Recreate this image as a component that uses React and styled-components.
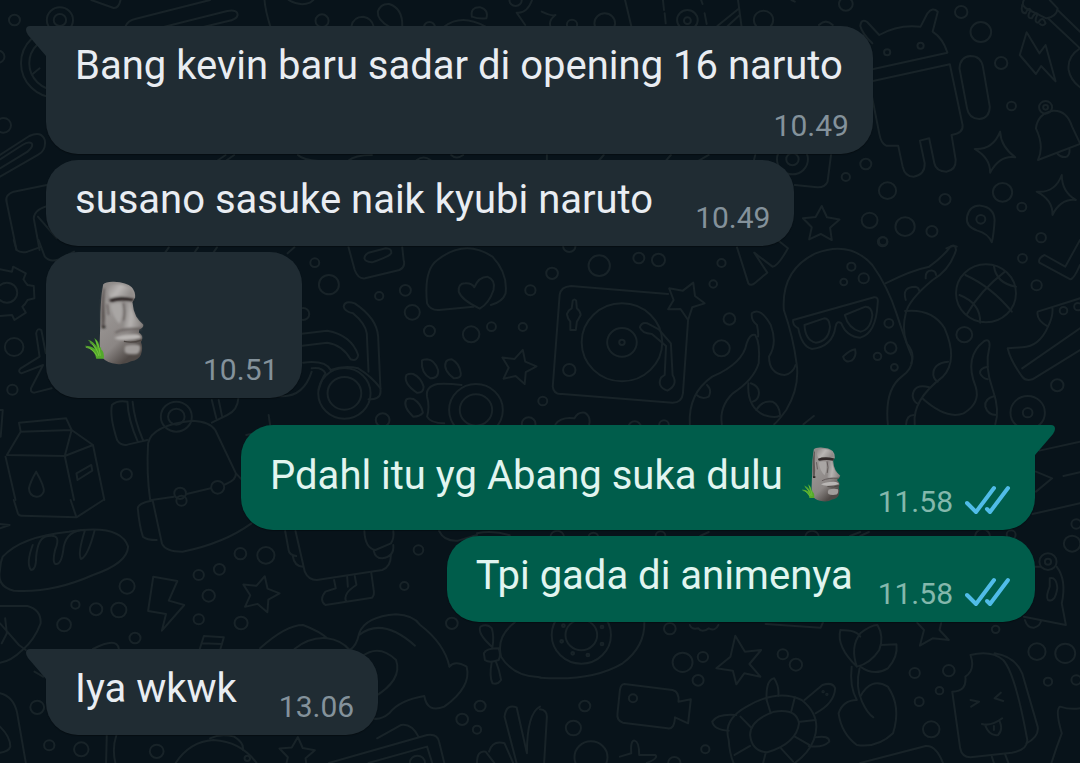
import { useId } from "react";
import styled, { createGlobalStyle } from "styled-components";

const GlobalStyle = createGlobalStyle`
  * {
    margin: 0;
    padding: 0;
    box-sizing: border-box;
  }

  body {
    background-color: #08131a;
    font-family: Roboto, "Liberation Sans", sans-serif;
  }
`;

const Container = styled.main`
  position: relative;
  min-height: 100vh;
  overflow: hidden;
  padding: 26px 45px 28px 46px;
`;

const WallpaperSvg = styled.svg`
  position: absolute;
  inset: 0;
  width: 100%;
  height: 100%;
  fill: none;
  stroke: #182328;
  stroke-width: 2;
  stroke-linecap: round;
  stroke-linejoin: round;

  path,
  circle {
    vector-effect: non-scaling-stroke;
  }
`;

const MessageList = styled.ol`
  position: relative;
  list-style: none;
  display: flex;
  flex-direction: column;
`;

const Bubble = styled.li`
  position: relative;
  display: flex;
  flex-direction: ${({ $stacked }) => ($stacked ? "column" : "row")};
  align-items: flex-end;
  align-self: ${({ $own }) => ($own ? "flex-end" : "flex-start")};
  gap: ${({ $own, $stacked }) => ($stacked ? 6 : $own ? 25 : 42)}px;
  max-width: 90%;
  margin-top: ${({ $first }) => ($first ? 27 : 6)}px;
  padding: 16px 24px 10px 29px;
  border-radius: 32px;
  border-top-left-radius: ${({ $own, $first }) =>
    !$own && $first ? 0 : 32}px;
  border-top-right-radius: ${({ $own, $first }) =>
    $own && $first ? 0 : 32}px;
  background-color: ${({ $own }) => ($own ? "#005d4b" : "#202c33")};
  color: ${({ $own }) => ($own ? "#e1f5f0" : "#e9edf2")};
  box-shadow: 0px 1px 1px 0px rgba(0, 0, 0, 0.3);

  &:first-child {
    margin-top: 0px;
  }
`;

const TailSvg = styled.svg`
  position: absolute;
  top: 0px;
  width: 21px;
  height: 31px;
  ${({ $own }) => ($own ? "right: -20px;" : "left: -20px;")}
  fill: ${({ $own }) => ($own ? "#005d4b" : "#202c33")};
`;

const Text = styled.p`
  margin-bottom: 12px;
  margin-right: ${({ $stacked }) => ($stacked ? 6 : 0)}px;
  font-size: 40px;
  line-height: 48px;
`;

const Meta = styled.div`
  display: flex;
  align-items: flex-end;
  gap: 12px;
  flex-shrink: 0;
  color: ${({ $own }) => ($own ? "#84b8ac" : "#84929b")};

  time {
    font-size: 30px;
    line-height: 36px;
  }
`;

const TicksSvg = styled.svg`
  width: 46px;
  height: 30px;
  margin-bottom: 5px;
  fill: none;
  stroke: #50bce8;
  stroke-width: 4;
  stroke-linecap: round;
  stroke-linejoin: round;
`;

const MoaiSvg = styled.svg`
  display: ${({ $large }) => ($large ? "block" : "inline-block")};
  width: ${({ $large }) => ($large ? 60 : 40)}px;
  height: ${({ $large }) => ($large ? 84 : 55)}px;
  margin: ${({ $large }) => ($large ? "13px 17px 23px 9px" : "6px 12px 6px 8px")};
  vertical-align: ${({ $large }) => ($large ? "baseline" : "-19px")};
`;

//======================================================

const star = (cx, cy, r, turn = 0) => {
  const points = Array.from({ length: 10 }, (_, i) => {
    const angle = ((i * 36 - 90 + turn) * Math.PI) / 180;
    const radius = i % 2 ? r * 0.5 : r;
    return `${(cx + radius * Math.cos(angle)).toFixed(1)} ${(
      cy +
      radius * Math.sin(angle)
    ).toFixed(1)}`;
  });
  return `M${points.join("L")}Z`;
};

// the wallpaper is drawn in six tiles, each with its own coordinates
const tiles = [
  {
    x: 0,
    y: 0,
    circles: [
      [42, 60, 16], [174, 60, 38], [174, 60, 18], [-5, 170, 18], [10, 376, 22],
      [935, 62, 19], [1247, 82, 16], [1497, 0, 18], [165, 190, 104],
      [165, 190, 80],
    ],
    paths: [
      "M265 0L330 24Q345 25 350 0",
      "M365 78Q370 62 395 56L610 0M440 90L660 33Q690 28 690 45Q688 58 660 64L520 98",
      "M768 0Q770 30 785 80M838 0Q870 20 900 8L910 0",
      "M1020 80Q1025 50 1055 50Q1080 55 1085 80M1130 80Q1095 60 1097 35Q1105 10 1130 12Q1170 25 1168 80",
      "M1290 80Q1340 40 1410 80M1370 50Q1365 20 1395 22Q1420 30 1412 55Q1390 58 1370 50",
      "M1545 0Q1530 42 1500 38L1525 75",
      "M95 222L115 205",
      "M0 465L85 408Q120 392 130 420Q135 450 110 465L0 530M0 505L80 455Q98 440 92 430Q82 424 65 435L0 478",
      "M150 552L40 575Q12 585 20 610L48 750M150 615Q100 625 98 655L115 750M110 650L165 715",
      "M630 483L655 465M655 483L680 465M865 465Q880 480 925 483M1010 483Q1030 465 1080 465M1210 480Q1230 465 1250 480M1310 465Q1325 480 1345 465",
    ],
  },
  {
    x: 540,
    y: 0,
    circles: [
      [888, 12, 20], [1223, 36, 18], [1280, 96, 30], [1339, 189, 18],
      [1369, 318, 13], [946, 492, 16], [888, 531, 12], [1009, 572, 25],
      [1176, 598, 16], [1343, 577, 28], [1399, 621, 13], [957, 661, 23],
      [1060, 680, 28], [1138, 694, 16], [996, 724, 12], [1455, 713, 14],
      [428, 60, 30], [428, 62, 10], [649, 60, 28], [188, 70, 30],
      [93, 74, 15], [733, 478, 45], [733, 478, 18], [1008, 157, 9],
      [1105, 137, 9], [1468, 322, 19], [1468, 322, 7], [1280, 658, 13],
    ],
    paths: [
      "M985 105L950 66Q932 55 930 78Q935 100 965 130M985 105Q1040 72 1105 80L1125 40Q1140 20 1155 35L1140 95Q1170 115 1183 158L955 210",
      "M950 247L1190 193L1227 375Q1230 400 1195 405L1207 480Q1208 510 1180 515Q1150 515 1145 490L1130 415L1103 422L1117 490Q1118 525 1085 530Q1060 530 1053 500L1040 437L1005 437Q990 430 985 400L955 243",
      "M1218 205Q1220 170 1250 168Q1280 168 1286 200L1306 320Q1305 355 1275 357Q1245 355 1240 325Z",
      "M1413 97L1393 165L1440 222L1455 198L1497 244L1468 135L1450 160Z",
      "M1405 0Q1395 20 1420 30L1470 55Q1500 50 1503 25L1480 0M1503 30L1568 95M1475 55L1568 145M1568 145Q1530 170 1535 210Q1540 240 1568 262",
      "M1400 15Q1395 40 1410 40Q1418 20 1425 30Q1410 55 1428 55Q1438 35 1445 42Q1432 68 1447 68Q1460 45 1468 70Q1460 80 1452 72",
      "M1440 385Q1445 340 1490 332Q1530 330 1545 380L1568 430M1440 385Q1465 440 1446 480L1568 432M1503 462Q1515 475 1530 470Q1540 462 1537 445",
      "M1336 395Q1338 440 1380 472Q1335 465 1307 518Q1308 475 1262 447Q1315 450 1336 395Z",
      "M1515 525Q1515 575 1556 600Q1512 595 1488 645Q1490 600 1442 575Q1495 580 1515 525Z",
      "M1312 727Q1300 700 1270 692Q1235 680 1240 650Q1248 615 1280 617Q1318 622 1320 660Q1318 700 1312 727Z",
      star(816, 674, 56, 2),
      "M845 465L835 545Q828 563 805 562L740 555M620 485L625 465M365 483L380 465M460 483L490 465M170 483L185 465M20 483V465",
      "M247 0L265 78M575 0L585 78M515 78L575 28M545 78L580 45M357 0L360 30M362 40L365 70M468 0L472 12M478 40L484 72",
      "M5 35Q35 50 45 45Q25 60 30 78M810 75Q830 55 850 75M1180 745Q1200 735 1210 740M730 0L740 5",
    ],
  },
  {
    x: 0,
    y: 240,
    circles: [
      [20, 158, 30], [41, 321, 27], [36, 449, 15], [914, 68, 13],
      [955, 134, 29], [1177, 151, 16], [1101, 168, 12], [1197, 217, 22],
      [1247, 273, 16], [1368, 283, 24], [1427, 260, 13], [1518, 261, 12],
      [1540, 151, 15], [880, 222, 18], [367, 703, 16], [1000, 460, 49],
      [1000, 460, 76], [1382, 510, 47], [1382, 510, 78], [1111, 540, 20],
      [1535, 552, 20], [512, 530, 45], [512, 530, 24], [523, 760, 17],
      [632, 742, 19],
    ],
    paths: [
      "M0 88L35 95L38 80L75 100L68 118Q75 130 80 135L98 138L100 175L80 180Q72 195 65 200L75 218L42 240L35 225L0 228",
      "M40 0L48 30Q60 40 80 35L115 22M112 0L130 50Q145 68 170 58L215 35",
      "M480 37L490 22M565 37L575 22M620 37L630 22M855 22L835 40",
      "M133 340L120 270Q108 262 105 280L115 350L60 385Q50 395 62 400L125 375L90 445Q88 458 100 458L150 445",
      "M1012 22L1030 90Q1040 118 1060 115L1160 90Q1178 80 1172 60L1168 22M1070 38L1120 25Q1138 25 1136 40Q1130 50 1080 67Q1060 65 1058 55Q1058 45 1070 38Z",
      "M1375 200L1275 210Q1250 212 1240 190Q1230 90 1270 60Q1350 -5 1430 50Q1475 100 1468 160Q1460 185 1425 195",
      "M1393 206Q1340 180 1332 155Q1330 130 1350 130Q1370 128 1377 142Q1390 110 1415 110Q1440 120 1433 150Q1420 190 1393 206Z",
      "M1070 395L1065 280Q1060 250 1025 220Q1000 215 998 200Q1000 180 1030 190Q1095 235 1098 290L1105 455Q1105 478 1070 478",
      "M870 282L950 272Q1020 285 1040 345Q1038 365 1018 358Q995 315 950 308L872 318",
      "M880 368Q945 360 960 390Q1000 375 1040 385Q1080 410 1105 445M925 450Q935 415 945 400Q935 380 905 385M810 468Q880 475 905 395",
      "M1225 362Q1222 400 1250 415Q1275 415 1272 390Q1262 360 1240 358Q1228 358 1225 362ZM1295 365Q1285 390 1318 415Q1340 415 1338 400Q1335 370 1312 358Q1300 358 1295 365Z",
      "M1180 405Q1170 430 1210 458Q1230 460 1230 440Q1222 412 1200 402Q1188 400 1180 405ZM1180 478Q1168 500 1200 530Q1220 530 1228 518Q1222 490 1200 477Q1188 474 1180 478Z",
      "M1340 435Q1300 430 1270 432Q1235 440 1240 470Q1248 500 1240 530Q1250 550 1290 550",
      star(1504, 382, 54, 15),
      "M55 548L192 535L208 570L188 648L20 645L60 575ZM60 575L208 570L270 615L188 648L215 780M270 615L303 780M16 650L45 780",
      "M222 700L265 675L268 692L225 720ZM105 695Q130 740 127 755Q120 772 105 770Q85 768 84 745Q88 725 105 695Z",
      "M0 510L8 510L2 590",
      "M428 600L370 614Q350 618 340 600Q318 530 325 495Q340 480 370 485Q372 540 400 605M385 485Q390 540 415 600",
      "M615 480L628 535M635 480L645 530M692 475Q690 510 660 525L615 548",
      "M436 780Q425 700 430 610Q440 555 560 542Q610 545 625 570L685 700Q685 720 660 730L650 735M612 745L542 762M505 770L440 780M685 700L705 722",
      "M780 525Q782 540 785 560M715 585L740 580",
    ],
  },
  {
    x: 540,
    y: 240,
    circles: [
      [238, 307, 117], [238, 307, 43], [238, 307, 8], [85, 390, 18],
      [35, 100, 17], [172, 77, 31], [287, 54, 16], [344, 60, 19],
      [527, 69, 12], [503, 132, 11], [550, 237, 17], [527, 325, 24],
      [904, 80, 12], [940, 115, 15], [882, 126, 10], [1013, 250, 13],
      [1018, 324, 17], [980, 349, 11], [1029, 382, 10], [1232, 284, 23],
      [1401, 55, 13], [1442, 136, 15], [1502, 436, 18], [1416, 518, 50],
      [1416, 518, 14], [8, 483, 13], [995, 5, 14], [1520, 212, 11],
      [1562, 200, 11], [85, 18, 18], [1295, 160, 87], [275, 562, 18],
      [360, 555, 14],
    ],
    paths: [
      "M372 162L90 138Q60 140 57 165L37 440Q40 465 65 462L385 488Q412 488 415 460L430 240",
      "M445 128L450 168L478 190L442 202L430 240L408 207L372 208L388 180L375 145L415 152Z",
      "M95 182Q100 175 105 182L107 205Q118 215 118 225Q110 240 107 245L104 270H88V245Q80 235 78 222Q82 210 92 205Z",
      "M290 262Q295 245 312 250L345 268L380 310L385 405Q402 435 370 452Q338 440 352 412L362 405L366 318L325 282Q295 280 290 262Z",
      "M1218 165Q1280 190 1278 248M1318 78Q1325 130 1382 140M1235 105Q1310 140 1370 215M1350 95Q1280 150 1240 222",
      "M572 22L605 130Q612 140 625 128L660 98L622 38L675 80Q690 80 720 25L690 0",
      "M680 553Q690 545 715 510Q755 440 745 370Q735 290 708 210Q700 90 800 40Q900 0 965 75Q1010 140 1035 220Q1060 300 1080 350Q1085 385 1050 410Q1000 450 1010 553",
      "M735 240L970 172Q985 170 980 195Q975 280 930 293Q890 290 875 250Q862 240 858 260Q850 320 790 327Q760 320 750 265Q732 255 735 240Z",
      "M768 255L825 235Q840 235 842 260Q838 305 800 308Q770 300 768 255ZM885 225L945 200Q963 200 965 225Q960 270 930 275Q895 265 885 225Z",
      "M880 350Q900 330 915 328Q920 350 905 362Q885 370 880 350Z",
      "M1003 130Q1080 90 1130 80Q1170 50 1190 22Q1205 8 1208 30Q1190 90 1140 120Q1070 180 1062 220Q1050 270 1065 310Q1090 340 1078 370M1062 180Q1050 140 1090 140Q1100 142 1102 155M1120 115Q1118 90 1140 92Q1150 95 1150 105",
      "M1060 213Q1140 205 1175 265Q1215 360 1170 410Q1080 480 1088 553M1110 475Q1180 540 1230 520Q1280 490 1265 440Q1230 350 1290 303Q1308 295 1305 320Q1290 380 1315 450Q1335 510 1322 553",
      "M1185 365Q1140 370 1142 405Q1145 420 1155 425M1130 442Q1085 430 1082 468Q1085 485 1095 490M1300 380Q1275 385 1278 400Q1285 415 1300 418M1320 468Q1290 475 1293 500Q1300 525 1325 525M1085 525Q1065 525 1063 553",
      "M435 553Q430 460 500 410Q590 370 600 310Q610 280 625 285Q640 310 635 370Q620 420 560 460Q520 500 528 553",
      "M633 290Q635 280 630 255Q612 240 615 220Q640 200 670 255Q690 310 665 350Q665 400 710 405Q735 400 742 375M605 430Q600 500 650 525Q680 535 695 528",
      "M485 435Q500 450 490 470Q470 480 455 465M612 430Q640 440 635 465Q632 480 618 485M628 510Q645 480 675 485Q695 495 697 525",
      "M1568 175L1445 215Q1440 240 1475 260Q1490 230 1488 205M1475 260Q1450 320 1400 322L1358 325Q1365 360 1400 410Q1410 425 1430 418L1568 330M1400 385L1568 265",
      "M1568 0L1525 80L1465 45Q1445 55 1450 68L1540 118Q1550 118 1568 75",
      "M45 553Q60 530 100 535Q110 515 130 518Q148 530 143 553M765 553L795 528",
      "M1450 632L1568 605M1440 695L1487 715L1440 755M1520 708L1568 697",
    ],
  },
  {
    x: 0,
    y: 500,
    circles: [
      [369, 259, 22], [219, 314, 12], [279, 328, 18], [345, 330, 22],
      [186, 374, 20], [392, 414, 16], [577, 225, 15], [637, 208, 16],
      [606, 287, 18], [577, 358, 15], [700, 369, 19], [698, 161, 17],
      [772, 166, 25], [1215, 150, 14], [1174, 258, 12], [1312, 370, 17],
      [1394, 618, 16], [1342, 658, 17], [1385, 689, 12], [143, 736, 15],
      [236, 748, 21], [455, 754, 20], [108, 622, 20], [527, 2, 15],
      [718, 775, 8], [1212, 789, 22],
    ],
    paths: [
      "M40 0L52 40Q55 48 65 47L222 52L300 0M205 0L222 52M0 72L28 75L0 85",
      "M8 170Q60 110 200 95Q350 70 372 140Q370 190 270 225Q150 280 40 272Q-10 260 0 210Q0 190 8 170",
      "M95 135Q75 190 90 210Q105 210 105 170Q110 110 140 108Q180 100 160 150Q150 195 165 192Q180 190 185 140Q195 90 247 90Q225 160 235 177Q255 170 275 90",
      "M445 230L515 243L490 302L535 315L470 392L482 342L430 333Z",
      star(755, 284, 57, 14),
      "M400 25Q405 80 415 110Q425 120 455 120M400 25Q400 10 440 2M443 0L470 130Q480 155 530 155Q650 130 730 70",
      "M0 318L80 318Q120 330 118 370Q100 420 65 450Q30 485 0 488M0 370L55 435L75 450M15 355L20 400L5 430",
      "M270 447Q340 410 345 447M580 447L592 408L650 412L640 447M585 430L645 432",
      "M828 93L838 150Q840 165 860 168M858 93L885 215Q895 240 920 240L1110 210Q1135 200 1135 165M850 168Q855 200 880 200M1058 93Q1060 145 1090 150L1135 130Q1145 115 1142 93M1085 152Q1090 175 1110 175Q1145 170 1142 135",
      "M970 240L975 265L945 275Q925 300 945 315L1080 293Q1088 285 1085 270L1078 218M1008 230L1010 260M1030 228L1035 255Q995 280 1005 305",
      "M755 445Q830 375 880 375Q930 395 950 415Q900 410 855 447M950 415Q990 420 1015 450Q1035 440 1043 400Q1060 350 1150 343Q1200 345 1220 375Q1290 430 1305 500M1043 405Q1110 350 1205 437",
      "M1305 500Q1320 480 1355 500Q1370 560 1290 620Q1240 640 1232 588Q1160 600 1130 640Q1105 662 1080 655M1050 470Q1100 430 1150 480Q1170 540 1085 592",
      "M1428 440Q1385 400 1395 380Q1415 370 1428 385Q1435 410 1430 440M1405 460Q1410 445 1448 445Q1455 465 1448 480Q1420 490 1408 480ZM1428 485Q1420 530 1430 550Q1445 555 1455 540Q1450 510 1440 485",
      "M1495 367Q1440 410 1455 470Q1490 530 1568 532M1275 93Q1290 125 1330 122L1385 105M1385 100Q1430 90 1480 106",
      "M310 705L308 789M338 705Q325 745 335 789M510 789Q550 725 620 720Q700 725 745 789M610 715Q640 700 680 710Q710 730 705 750",
      star(862, 765, 54, 3),
      "M955 789L1240 705Q1270 700 1275 725L1290 789M1095 715L1165 675Q1195 670 1215 710M1070 789L1240 740L1255 789",
      "M1500 789L1465 650Q1470 610 1500 622L1530 760Q1530 640 1568 620M1385 789Q1385 750 1410 755L1435 789M1420 755Q1430 720 1465 730L1490 789",
      "M0 580Q40 590 50 640L75 789M0 680Q30 710 30 740Q25 755 0 758M100 515L125 530",
    ],
  },
  {
    x: 540,
    y: 500,
    circles: [
      [1545, 131, 24], [1557, 72, 14], [1323, 388, 11], [1443, 455, 25],
      [1525, 460, 29], [1475, 545, 12], [1557, 540, 14], [1088, 519, 15],
      [1187, 512, 17], [1160, 572, 11], [1101, 605, 13], [1136, 688, 24],
      [705, 463, 15], [743, 494, 18], [414, 487, 29], [473, 471, 15],
      [459, 541, 16], [377, 386, 17], [130, 618, 16], [97, 684, 22],
      [148, 772, 48], [480, 748, 12], [390, 789, 18], [120, 405, 86],
      [120, 405, 46], [63, 424, 4], [95, 460, 4], [139, 465, 4],
      [180, 432, 4], [180, 381, 4], [68, 377, 4], [270, 595, 12],
      [1475, 185, 25], [1475, 185, 9], [822, 575, 2], [833, 583, 2],
      [50, 112, 20], [155, 112, 14], [350, 108, 14], [790, 112, 20],
      [1285, 110, 22], [1368, 104, 13],
    ],
    paths: [
      "M0 533Q150 545 240 490Q305 440 303 366",
      "M245 552L385 570Q405 575 402 605L438 598L430 670L392 652Q390 690 370 685L240 668Q222 660 225 640L232 570Q235 552 245 552Z",
      "M567 407L595 455L642 450L608 492L640 530L593 520L570 553L560 512L512 505L553 470Z",
      "M740 789Q780 760 795 720Q820 650 760 600Q690 565 600 620Q530 660 548 720Q550 760 562 789",
      "M610 705Q610 660 680 635Q745 625 752 670Q745 730 660 757Q615 755 610 705ZM582 650L615 685M658 600L670 640M740 592L730 632M755 665L800 660M740 710L782 735M700 745L735 785M655 760L648 789M610 738L565 765",
      "M658 600Q655 540 680 535Q695 560 692 587M768 600L820 555Q850 545 857 565Q855 610 800 640M570 645Q515 640 500 665Q505 690 548 692M800 712Q840 705 840 725Q820 745 780 738",
      "M920 500Q860 440 872 390Q920 390 930 410M920 500Q900 440 930 400Q960 375 980 375Q1000 410 985 450Q960 490 920 500M990 435L1035 433Q1040 470 1010 505Q970 530 930 500",
      "M905 500Q898 560 920 600M928 505Q915 560 935 605Q950 640 968 652M920 600Q880 600 867 640Q875 700 920 735Q980 745 1025 700Q1050 620 1010 560Q960 530 930 590",
      "M1250 465Q1310 450 1345 480Q1380 520 1415 720Q1415 750 1370 758L1250 772Q1225 772 1220 745L1197 575Q1240 575 1235 530Q1265 510 1250 465ZM1320 460Q1380 470 1400 520L1445 680Q1450 710 1412 730",
      "M1250 600L1275 605L1252 620M1338 578L1320 595L1345 603M1283 672Q1310 680 1342 655M1292 675Q1305 710 1330 705Q1345 690 1335 665M1318 678V690M1312 770L1318 789M1350 762L1360 789",
      "M1435 200H1455M1500 200Q1530 240 1515 310L1527 375L1405 350M1480 235Q1500 230 1502 265Q1495 310 1475 300Q1468 290 1480 260ZM1408 360Q1415 385 1435 383Q1452 378 1455 362",
      "M435 375Q440 390 460 385Q470 400 490 385Q510 395 518 375M655 372L815 383L822 366",
      "M1095 368L1115 390L1103 437L1140 415L1187 420L1160 390L1165 368",
      "M232 770L265 760Q262 720 275 722Q288 725 288 765L335 765Q345 775 310 789",
      "M0 628Q20 630 20 650L12 789M930 789L1120 738Q1150 735 1170 789M1568 625Q1540 630 1510 620Q1495 630 1515 700Q1500 740 1485 789M1430 42L1568 10M465 108L490 96M900 108L930 96M930 108L955 96",
    ],
  },
];

const Wallpaper = () => {
  return (
    <WallpaperSvg
      viewBox="0 0 1080 763"
      preserveAspectRatio="xMidYMid slice"
      aria-hidden="true"
    >
      {tiles.map(({ x, y, circles, paths }) => (
        <g
          key={`${x}-${y}`}
          transform={`translate(${x} ${y}) scale(0.3444 0.3333)`}
        >
          {circles.map(([cx, cy, r], i) => (
            <circle key={i} cx={cx} cy={cy} r={r} />
          ))}
          {paths.map((d, i) => (
            <path key={i} d={d} />
          ))}
        </g>
      ))}
    </WallpaperSvg>
  );
};

const Tail = ({ own }) => {
  return (
    <TailSvg $own={own} viewBox="0 0 21 31" aria-hidden="true">
      <path
        d="M21 0H4Q0 0 0 4Q0 6 2 9L20 30H21Z"
        transform={own ? "translate(21 0) scale(-1 1)" : undefined}
      />
    </TailSvg>
  );
};

const Ticks = () => {
  return (
    <TicksSvg viewBox="0 0 46 30" role="img" aria-label="Dibaca">
      <path d="M2 18L11 27L29 3" />
      <path d="M22 24L25 27L43 3" />
    </TicksSvg>
  );
};

const Moai = ({ large }) => {
  const id = useId();
  const stone = `${id}-stone`;
  const brow = `${id}-brow`;
  const nose = `${id}-nose`;
  const soft = `${id}-soft`;

  return (
    <MoaiSvg
      $large={large}
      viewBox="40 36 176 246"
      role="img"
      aria-label="moai"
    >
      <defs>
        <linearGradient id={stone} x1="0" y1="0" x2="0.5" y2="1">
          <stop offset="0" stopColor="#8a8684" />
          <stop offset="0.35" stopColor="#9a9694" />
          <stop offset="0.75" stopColor="#8b8684" />
          <stop offset="1" stopColor="#4f4946" />
        </linearGradient>
        <linearGradient id={brow} x1="0" y1="0" x2="1" y2="0.4">
          <stop offset="0" stopColor="#8d8987" />
          <stop offset="0.5" stopColor="#b9b6b4" />
          <stop offset="1" stopColor="#8f8b89" />
        </linearGradient>
        <linearGradient id={nose} x1="0" y1="0" x2="1" y2="0.2">
          <stop offset="0" stopColor="#858180" />
          <stop offset="0.5" stopColor="#b5b2b0" />
          <stop offset="1" stopColor="#8e8a88" />
        </linearGradient>
        <filter id={soft}>
          <feGaussianBlur stdDeviation="2.5" />
        </filter>
      </defs>
      <path
        fill={`url(#${stone})`}
        d="M96 46Q104 37 128 38Q165 40 180 54Q191 66 190 84L182 98Q184 122 193 140Q202 155 214 164Q215 173 202 178L201 187Q211 193 211 204L207 215Q214 232 207 252Q200 268 178 271Q160 282 136 279Q108 277 94 261Q85 245 86 215L88 160Q88 90 96 46Z"
      />
      <g filter={`url(#${soft})`}>
        <path
          fill={`url(#${brow})`}
          d="M114 47Q158 40 178 60Q187 72 184 83Q150 76 117 86Q105 68 114 47Z"
        />
        <path
          fill="#5e5957"
          d="M96 60L101 54Q98 100 102 140L100 174Q94 178 91 168Q88 100 96 60Z"
        />
        <path
          fill="#312c2a"
          d="M115 88Q145 76 188 87L182 97Q151 90 122 98Q113 96 115 88Z"
        />
        <path fill="#a9a6a4" d="M118 105Q136 98 150 102Q156 138 144 162Q122 140 118 105Z" />
        <path
          fill={`url(#${nose})`}
          d="M158 99L177 99Q180 124 191 143Q201 156 211 164Q206 171 196 171L158 174Q153 170 159 158Q166 140 158 99Z"
        />
        <path
          fill="none"
          stroke="#5d5755"
          strokeWidth="4"
          d="M155 100Q163 128 156 152M108 104L112 136M132 187Q160 172 208 177"
        />
        <path
          fill="#b9b6b4"
          d="M128 203Q151 190 195 192Q208 195 209 203Q184 210 153 209Q138 209 128 203Z"
        />
        <path
          fill="#a19d9b"
          d="M162 226Q188 219 204 225Q208 240 198 249Q175 254 161 246Q156 235 162 226Z"
        />
        <path fill="#2e2926" d="M92 167H103V173Q96 177 92 173Z" />
      </g>
      <path fill="none" stroke="#4a4441" strokeWidth="4" d="M157 213Q184 219 209 209" />
      <path
        fill="#52a82a"
        d="M76 264Q74 242 42 226Q61 226 72 235Q65 218 51 208Q69 212 78 231Q74 211 70 203Q86 213 85 232Q92 227 90 236Q100 243 98 264Z"
      />
      <path
        fill="none"
        stroke="#83cf45"
        strokeWidth="2"
        d="M57 216Q78 230 84 256M45 230Q68 234 79 257M75 210Q86 230 88 255"
      />
    </MoaiSvg>
  );
};

const Message = ({ own = false, first = false, stacked = false, time, children }) => {
  return (
    <Bubble $own={own} $first={first} $stacked={stacked}>
      {first && <Tail own={own} />}
      {children}
      <Meta $own={own}>
        <time>{time}</time>
        {own && <Ticks />}
      </Meta>
    </Bubble>
  );
};

const App = () => {
  return (
    <>
      <GlobalStyle />
      <Container>
        <Wallpaper />
        <MessageList>
          <Message first stacked time="10.49">
            <Text $stacked>Bang kevin baru sadar di opening 16 naruto</Text>
          </Message>
          <Message time="10.49">
            <Text>susano sasuke naik kyubi naruto</Text>
          </Message>
          <Message time="10.51">
            <Moai large />
          </Message>
          <Message own first time="11.58">
            <Text>
              Pdahl itu yg Abang suka dulu <Moai />
            </Text>
          </Message>
          <Message own time="11.58">
            <Text>Tpi gada di animenya</Text>
          </Message>
          <Message first time="13.06">
            <Text>Iya wkwk</Text>
          </Message>
        </MessageList>
      </Container>
    </>
  );
};

export default App;
